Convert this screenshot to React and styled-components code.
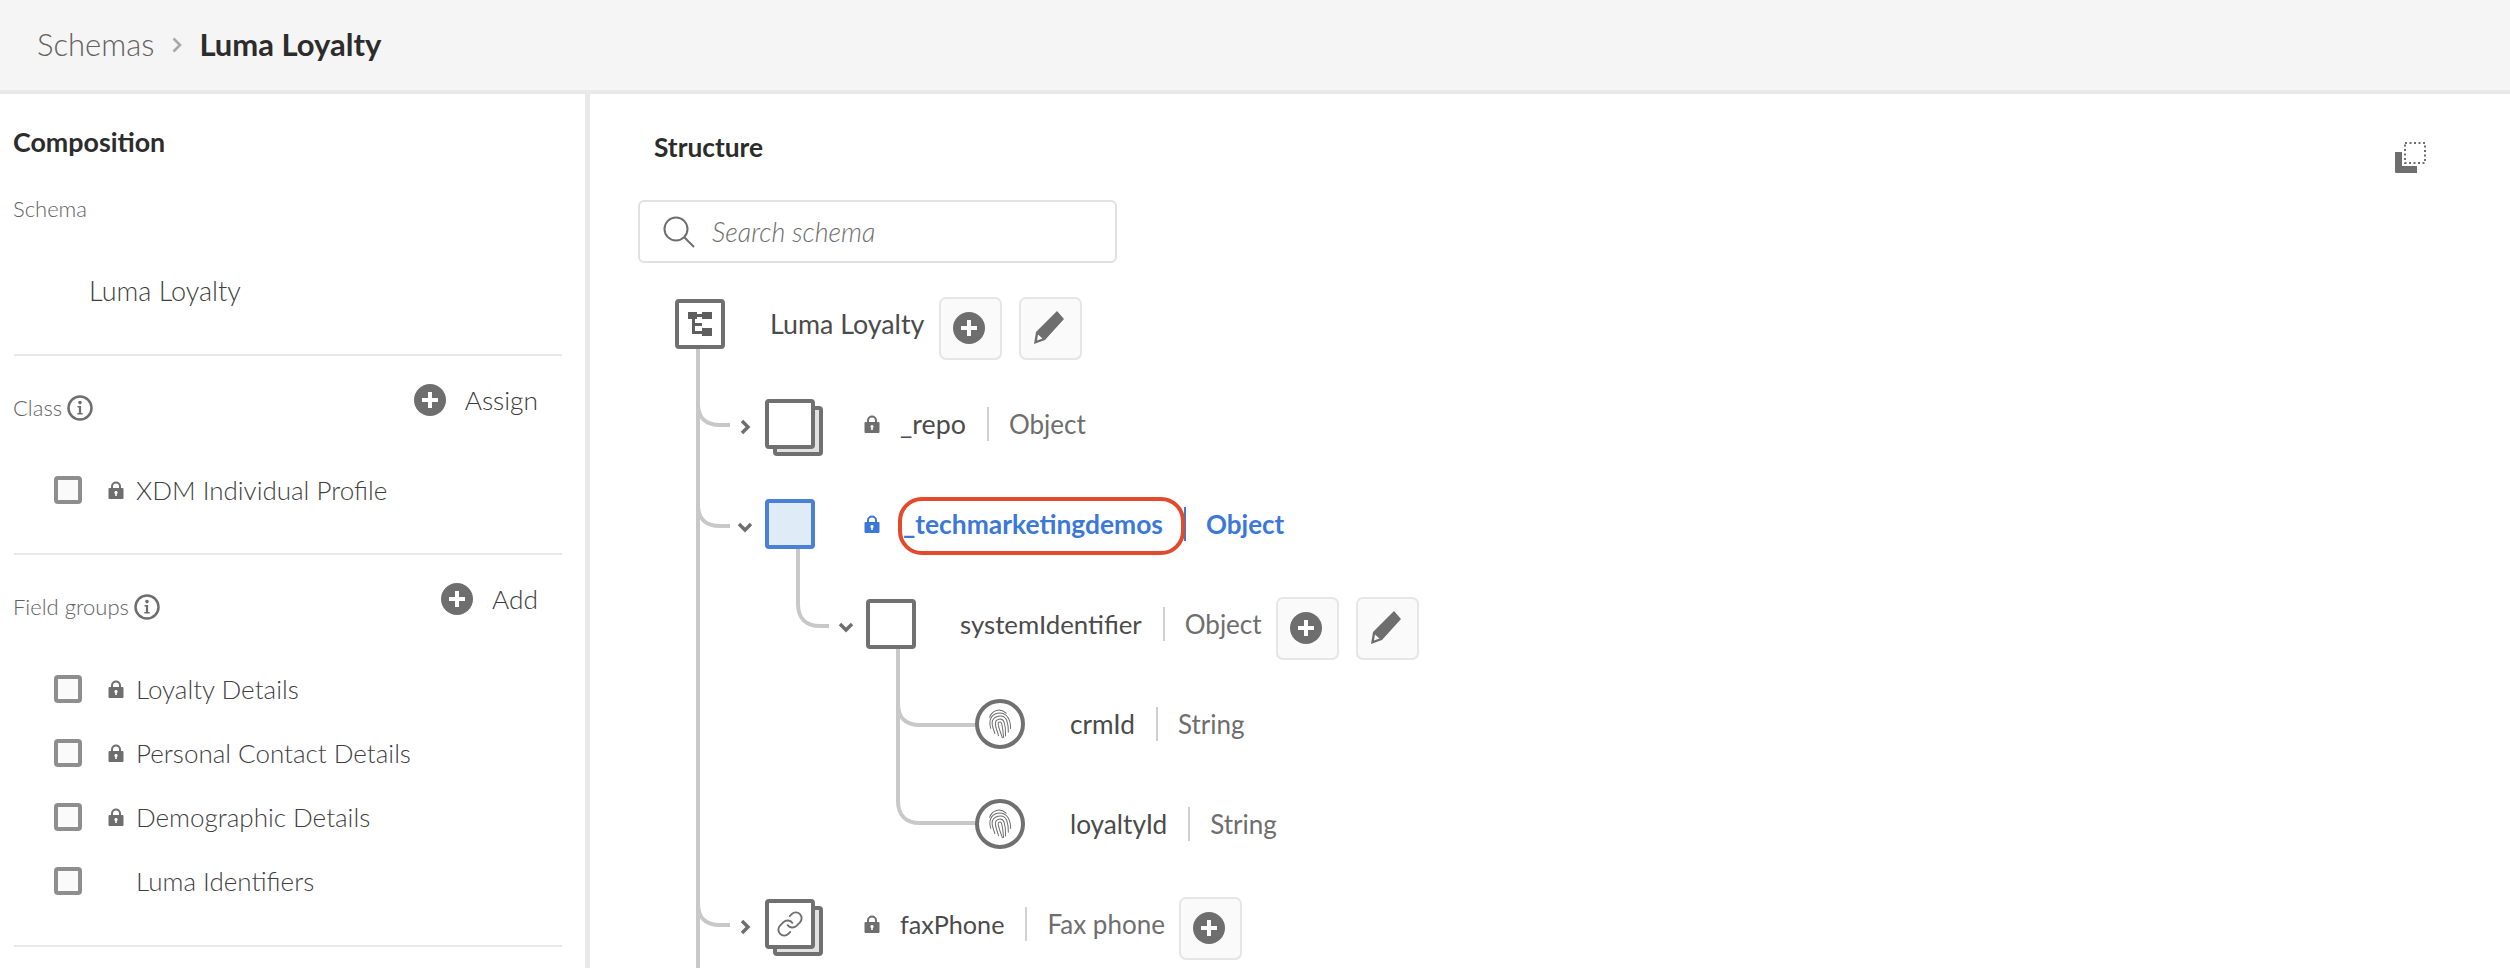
import React from "react";
import styled, { createGlobalStyle } from "styled-components";
import { Link as LinkIcon } from "lucide-react";

const Global = createGlobalStyle`
  html, body { margin: 0; padding: 0; background: #fff; overflow: hidden; }
  body { font-family: "Lato", "Liberation Sans", sans-serif; color: #4b4b4b; }
`;

const Page = styled.div`
  width: 2510px; height: 968px; overflow: hidden; display: flex; flex-direction: column;
`;
const TopBar = styled.header`
  height: 90px; flex: none; display: flex; align-items: center; padding: 0 0 2px 37px; box-sizing: border-box;
  background: #f5f5f5; box-shadow: 0 4px 0 #e9e9e9; position: relative;
`;
const CrumbLink = styled.span`font-size: 31px; font-weight: 300; color: #626262;`;
const CrumbSep = styled.svg`width: 10px; height: 16px; margin: 2px 17px 0 18px; flex: none;`;
const CrumbCurrent = styled.span`font-size: 31px; font-weight: 700; color: #2c2c2c;`;
const Body = styled.div`flex: 1; display: flex; min-height: 0; margin-top: 4px;`;

const Rail = styled.aside`
  width: 590px; flex: none; box-sizing: border-box; padding: 33px 23px 0 13px; border-right: 5px solid #e9e9e9;
`;
const RailTitle = styled.h2`margin: 0; font-size: 26.8px; line-height: 30px; font-weight: 700; color: #2c2c2c;`;
const FieldLabel = styled.div`
  font-size: 22px; line-height: 28px; font-weight: 300; color: #626262; display: flex; align-items: center; gap: 5px;
`;
const SchemaLabel = styled(FieldLabel)`margin-top: 38px;`;
const SchemaName = styled.div`margin: 53px 0 48px 76px; font-size: 27px; line-height: 30px; font-weight: 300; color: #3f3f3f;`;
const Section = styled.section`padding: 28px 0 31px; margin-left: 1px; border-top: 2px solid #e9e9e9;
  &:last-child { border-bottom: 2px solid #e9e9e9; padding-bottom: 32px; }`;
const SectionHead = styled.div`display: flex; justify-content: space-between; align-items: flex-start; padding-right: 24px;
  ${FieldLabel} { margin-top: 10px; margin-left: -1px; }`;
const Action = styled.div`display: flex; align-items: center; gap: 19px; font-size: 26.3px; line-height: 32px; font-weight: 300; color: #3a3a3a;`;
const CheckList = styled.ul`list-style: none; margin: 36px 0 0; padding: 0 0 0 40px;`;
const CheckRow = styled.li`height: 64px; display: flex; align-items: center; font-size: 26px; font-weight: 300; color: #3f3f3f;`;
const Check = styled.span`
  width: 28px; height: 28px; flex: none; box-sizing: border-box; border: 4px solid #8e8e8e; border-radius: 4px; background: #fafafa; margin-right: 26px;
`;
const LockSlot = styled.span`width: 16px; flex: none; margin-right: 12px; display: flex; align-items: center;`;

const Main = styled.main`flex: 1; min-width: 0; position: relative;`;
const MainHead = styled.div`display: flex; justify-content: space-between; align-items: flex-start; padding: 38px 84px 0 64px;`;
const MainTitle = styled.h2`margin: 0; font-size: 26.3px; line-height: 30px; font-weight: 700; color: #2c2c2c;`;
const ExpandIcon = styled.svg`width: 32px; height: 32px; margin-top: 10px; flex: none;`;
const SearchBox = styled.div`
  margin: 26px 0 11px 48px; width: 479px; height: 63px; box-sizing: border-box; border: 2px solid #e1e1e1; border-radius: 6px;
  display: flex; align-items: center; gap: 17px; padding-left: 23px; background: #fff;
`;
const SearchText = styled.span`font-size: 26.8px; font-style: italic; font-weight: 300; color: #6e6e6e;`;

const Tree = styled.div`position: relative; height: 700px;`;
const Wires = styled.svg`position: absolute; left: 0; top: 0; width: 800px; height: 700px; pointer-events: none;`;
const Row = styled.div`
  position: relative; height: 100px; display: flex; align-items: center; padding-left: ${p => p.$indent}px; box-sizing: border-box;
`;
const Twist = styled.span`width: 30px; flex: none; display: flex; justify-content: center; padding-top: 6px; padding-right: 10px; box-sizing: border-box;`;
const NodeBox = styled.span`
  position: relative; width: 50px; height: 50px; flex: none; box-sizing: border-box; display: flex; align-items: center; justify-content: center;
  border: 4px solid ${p => (p.$active ? "#4a80d8" : "#707070")}; border-radius: ${p => (p.$round ? "50%" : "4px")};
  background: ${p => (p.$active ? "#e0ebf8" : "#fff")};
`;
const StackBack = styled.span`
  position: absolute; left: 8px; top: 7px; width: 50px; height: 50px; box-sizing: border-box; border: 4px solid #707070; border-radius: 4px; background: #e1e1e1; z-index: -1;
`;
const NodeWrap = styled.span`position: relative; z-index: 0; flex: none; display: flex;`;
const Name = styled.span`
  margin-left: ${p => p.$gap}px; font-size: ${p => p.$size || 26.2}px; font-weight: ${p => (p.$active ? 700 : 400)};
  color: ${p => (p.$active ? "#3b78d8" : "#4b4b4b")};
`;
const NodeLock = styled.span`margin-left: 49px; width: 16px; flex: none; display: flex;`;
const TypeSep = styled.span`width: 2px; height: 34px; margin: 0 20px 0 21px; flex: none; background: ${p => (p.$active ? "#3b78d8" : "#d0d0d0")};`;
const TypeName = styled.span`font-size: 26px; font-weight: ${p => (p.$active ? 700 : 400)}; color: ${p => (p.$active ? "#3b78d8" : "#6e6e6e")};`;
const RoundMark = styled.span`
  position: absolute; left: 308px; top: 23px; width: 287px; height: 58px; box-sizing: border-box; border: 4px solid #e34a2b; border-radius: 24px; pointer-events: none;
`;
const ToolButton = styled.button`
  width: 63px; height: 63px; margin: 8px 0 0 ${p => p.$gap}px; padding: 0 3px 0 0; flex: none; box-sizing: border-box; display: flex; align-items: center; justify-content: center;
  border: 2px solid #e6e6e6; border-radius: 7px; background: #fafafa;
`;

const Lock = ({ color = "#6e6e6e" }) => (
  <svg width="16" height="18" viewBox="0 0 16 18">
    <path d="M4 8V5.5a4 4 0 0 1 8 0V8" fill="none" stroke={color} strokeWidth="2" />
    <path fillRule="evenodd" d="M1.5 7h13a1 1 0 0 1 1 1v9a1 1 0 0 1-1 1h-13a1 1 0 0 1-1-1V8a1 1 0 0 1 1-1zM8 10a1.6 1.6 0 0 0-.8 3v2h1.6v-2A1.6 1.6 0 0 0 8 10z" fill={color} />
  </svg>
);
const Plus = () => (
  <svg width="32" height="32" viewBox="0 0 32 32">
    <circle cx="16" cy="16" r="16" fill="#6e6e6e" />
    <path d="M16 8v16M8 16h16" stroke="#fff" strokeWidth="4" />
  </svg>
);
const Pencil = () => (
  <svg width="32" height="36" viewBox="0 0 32 36">
    <path fillRule="evenodd" fill="#6e6e6e" d="M24 1l7 8-19 21-11 4 2-12zM5 24.5l-1 6 5.5-2z" />
  </svg>
);
const Info = () => (
  <svg width="26" height="26" viewBox="0 0 26 26">
    <circle cx="13" cy="13" r="11.5" fill="none" stroke="#6e6e6e" strokeWidth="2.5" />
    <circle cx="13" cy="7.6" r="1.8" fill="#6e6e6e" />
    <path d="M10.5 11h3.6v7h1.6v1.6h-5.4V18h1.6v-5.4h-1.4z" fill="#6e6e6e" />
  </svg>
);
const Chevron = ({ open }) => (
  <svg width="16" height="16" viewBox="0 0 16 16" fill="none" stroke="#6e6e6e" strokeWidth="3.4">
    {open ? <path d="M2 5l6 6 6-6" /> : <path d="M5 2l6 6-6 6" />}
  </svg>
);
const TreeGlyph = () => (
  <svg width="24" height="26" viewBox="0 0 24 26" fill="#5e5e5e">
    <path d="M0 1h9v7H0zM14 1h10v7H14zM14 17h10v8H14z" />
    <path d="M4 8h3v4h7v3H7v5h7v3H4zM9 3h5v3H9z" />
  </svg>
);
const Print = () => (
  <svg width="22" height="30" viewBox="0 0 22 30" fill="none" stroke="#6e6e6e" strokeWidth="1" strokeLinecap="round" style={{ transform: "rotate(-14deg)" }}>
    <path d="M2.500 6C5 2.200 8 1 11 1s6 1.200 8.500 5" />
    <path d="M1 17C.4 9 4.500 4 11 4s10.600 5 10 13c-.1 2-.4 3.500-.8 5" />
    <path d="M3.700 23C3.200 18 3 15 3.500 12.500 4.300 9 7 7 11 7s6.900 2.500 7.400 6c.3 3.500-.2 8-1.300 12" />
    <path d="M6.800 26C6.400 21 6 17 6.500 14 7 11.500 8.700 10 11 10s4 1.500 4.400 4c.3 4-.4 9-1.900 14" />
    <path d="M10 29c-.6-5-1-10-.9-14 .1-1.300.9-2 1.900-2s1.700.8 1.700 2c0 4-.5 9-1.500 14" />
  </svg>
);

const Node = ({ kind, active, round, children }) => (
  <NodeWrap>
    {kind === "stack" && <StackBack />}
    <NodeBox $active={active} $round={round}>{children}</NodeBox>
  </NodeWrap>
);

const Type = ({ active, children }) => (
  <>
    <TypeSep $active={active} />
    <TypeName $active={active}>{children}</TypeName>
  </>
);

const classes = [{ name: "XDM Individual Profile", locked: true }];
const groups = [
  { name: "Loyalty Details", locked: true },
  { name: "Personal Contact Details", locked: true },
  { name: "Demographic Details", locked: true },
  { name: "Luma Identifiers", locked: false },
];

const Checks = ({ items }) => (
  <CheckList>
    {items.map(i => (
      <CheckRow key={i.name}>
        <Check />
        <LockSlot>{i.locked && <Lock />}</LockSlot>
        {i.name}
      </CheckRow>
    ))}
  </CheckList>
);

export default function App() {
  return (
    <Page>
      <Global />
      <TopBar>
        <CrumbLink>Schemas</CrumbLink>
        <CrumbSep viewBox="0 0 10 16"><path d="M1.500 1.500l6.500 6.500-6.500 6.500" fill="none" stroke="#a8a8a8" strokeWidth="2.6" /></CrumbSep>
        <CrumbCurrent>Luma Loyalty</CrumbCurrent>
      </TopBar>
      <Body>
        <Rail>
          <RailTitle>Composition</RailTitle>
          <SchemaLabel>Schema</SchemaLabel>
          <SchemaName>Luma Loyalty</SchemaName>
          <Section>
            <SectionHead>
              <FieldLabel>Class <Info /></FieldLabel>
              <Action><Plus /> Assign</Action>
            </SectionHead>
            <Checks items={classes} />
          </Section>
          <Section>
            <SectionHead>
              <FieldLabel>Field groups <Info /></FieldLabel>
              <Action><Plus /> Add</Action>
            </SectionHead>
            <Checks items={groups} />
          </Section>
        </Rail>
        <Main>
          <MainHead>
            <MainTitle>Structure</MainTitle>
            <ExpandIcon viewBox="0 0 32 32">
              <rect x="11" y="1" width="20" height="20" fill="none" stroke="#6e6e6e" strokeWidth="2" strokeDasharray="2 2.5" />
              <path d="M1 10h7v14h15v7H2a1 1 0 0 1-1-1z" fill="#6e6e6e" />
            </ExpandIcon>
          </MainHead>
          <SearchBox>
            <svg width="32" height="32" viewBox="0 0 32 32" fill="none" stroke="#6e6e6e" strokeWidth="2">
              <circle cx="13" cy="13" r="11.500" />
              <path d="M21.500 21.500L31 31" />
            </svg>
            <SearchText>Search schema</SearchText>
          </SearchBox>
          <Tree>
            <Wires viewBox="0 0 800 700" fill="none" stroke="#c8c8c8" strokeWidth="4">
              <path d="M108 70V700" />
              <path d="M108 130c0 14 8 21 22 21h10" />
              <path d="M108 231c0 14 8 21 22 21h10" />
              <path d="M108 630c0 14 8 21 22 21h10" />
              <path d="M208 270v60c0 14 8 22 22 22h9" />
              <path d="M308 370v157c0 14 8 22 22 22h56" />
              <path d="M308 430c0 14 8 21 22 21h56" />
            </Wires>
            <Row $indent={55}>
              <Twist />
              <Node><TreeGlyph /></Node>
              <Name $gap={45} $size={26.8}>Luma Loyalty</Name>
              <ToolButton $gap={15}><Plus /></ToolButton>
              <ToolButton $gap={17}><Pencil /></ToolButton>
            </Row>
            <Row $indent={145}>
              <Twist><Chevron /></Twist>
              <Node kind="stack" />
              <NodeLock><Lock /></NodeLock>
              <Name $gap={20} $size={26.8}>_repo</Name>
              <Type>Object</Type>
            </Row>
            <Row $indent={145}>
              <Twist><Chevron open /></Twist>
              <Node active />
              <NodeLock><Lock color="#3b78d8" /></NodeLock>
              <Name $gap={23} $size={26.4} $active>_techmarketingdemos</Name>
              <Type active>Object</Type>
              <RoundMark />
            </Row>
            <Row $indent={246}>
              <Twist><Chevron open /></Twist>
              <Node />
              <Name $gap={44} $size={25.8}>systemIdentifier</Name>
              <Type>Object</Type>
              <ToolButton $gap={14}><Plus /></ToolButton>
              <ToolButton $gap={17}><Pencil /></ToolButton>
            </Row>
            <Row $indent={355}>
              <Twist />
              <Node round><Print /></Node>
              <Name $gap={45}>crmId</Name>
              <Type>String</Type>
            </Row>
            <Row $indent={355}>
              <Twist />
              <Node round><Print /></Node>
              <Name $gap={45}>loyaltyId</Name>
              <Type>String</Type>
            </Row>
            <Row $indent={145}>
              <Twist><Chevron /></Twist>
              <Node kind="stack"><LinkIcon size={28} strokeWidth={1.6} color="#6e6e6e" /></Node>
              <NodeLock><Lock /></NodeLock>
              <Name $gap={20} $size={25.2}>faxPhone</Name>
              <Type>Fax phone</Type>
              <ToolButton $gap={14}><Plus /></ToolButton>
            </Row>
          </Tree>
        </Main>
      </Body>
    </Page>
  );
}
